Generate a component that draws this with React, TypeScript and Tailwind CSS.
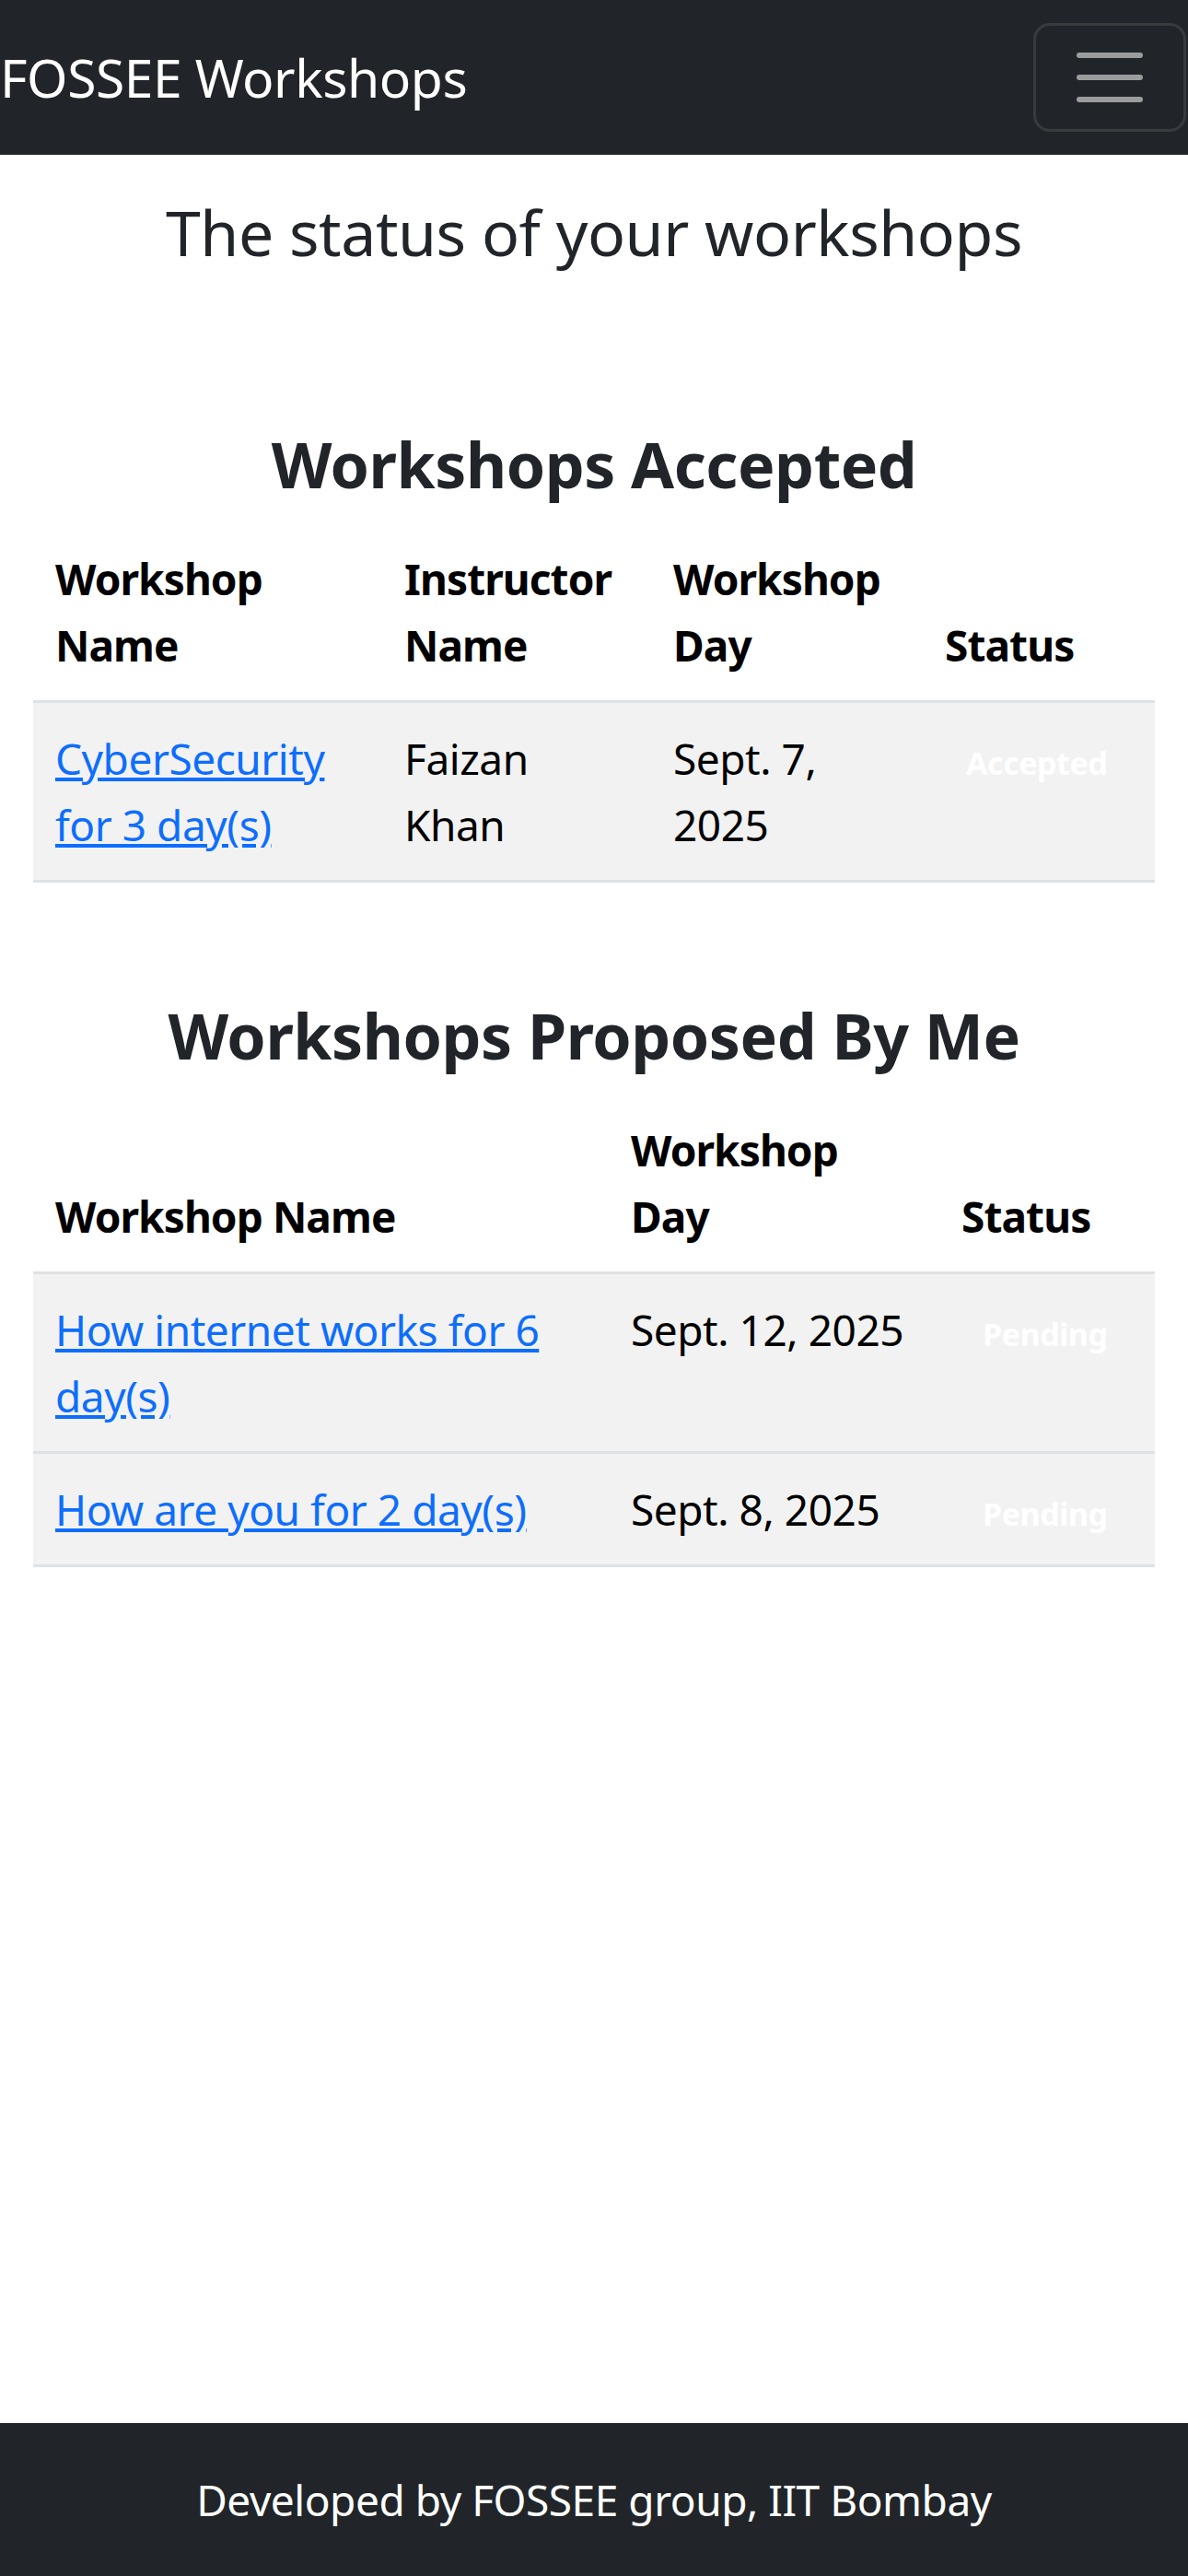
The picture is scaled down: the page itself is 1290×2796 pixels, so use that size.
import React from "react";

const accepted = [
  { name: "CyberSecurity for 3 day(s)", instructor: "Faizan Khan", day: "Sept. 7, 2025", status: "Accepted" },
];

const proposed = [
  { name: "How internet works for 6 day(s)", day: "Sept. 12, 2025", status: "Pending" },
  { name: "How are you for 2 day(s)", day: "Sept. 8, 2025", status: "Pending" },
];

function Badge({ label }: { label: string }) {
  return (
    <span className="inline-block px-[23px] py-[13px] align-baseline text-[34px] font-bold leading-none text-white">
      {label}
    </span>
  );
}

export default function App() {
  return (
    <div
      className="flex min-h-[2796px] flex-col bg-white text-[46px] leading-[72px] tracking-[-0.01em] text-[#212529]"
      style={{ fontFamily: '"Noto Sans", "Open Sans", sans-serif' }}
    >
      {/* Navbar */}
      <nav className="flex h-[168px] items-center justify-between bg-[#212529] pr-[2px]">
        <span className="text-[57px] leading-[90px] text-white">FOSSEE Workshops</span>
        <button className="flex h-[118px] w-[166px] items-center justify-center rounded-[18px] border-[3px] border-white/10">
          <svg width="90" height="90" viewBox="0 0 30 30">
            <path
              d="M4 7h22M4 15h22M4 23h22"
              stroke="rgba(255,255,255,0.55)"
              strokeWidth="2"
              strokeLinecap="round"
              strokeMiterlimit="10"
            />
          </svg>
        </button>
      </nav>

      <main className="flex-1 px-[36px]">
        <h3 className="mt-[42px] text-center text-[68px] font-normal leading-[84px]">
          The status of your workshops
        </h3>

        {/* Accepted */}
        <h3 className="mt-[170px] mb-[24px] text-center text-[68px] font-bold leading-[80px]">
          Workshops Accepted
        </h3>
        <table className="w-full table-fixed border-collapse text-left text-black">
          <colgroup>
            <col className="w-[379px]" />
            <col className="w-[292px]" />
            <col className="w-[295px]" />
            <col />
          </colgroup>
          <thead>
            <tr className="border-b-[3px] border-[#dee2e6] align-bottom">
              <th className="p-[24px] font-bold tracking-[-0.02em]">Workshop Name</th>
              <th className="p-[24px] font-bold tracking-[-0.02em]">Instructor Name</th>
              <th className="p-[24px] font-bold tracking-[-0.02em]">Workshop Day</th>
              <th className="p-[24px] font-bold tracking-[-0.02em]">Status</th>
            </tr>
          </thead>
          <tbody>
            {accepted.map((w) => (
              <tr key={w.name} className="border-b-[3px] border-[#dee2e6] bg-[#f2f2f2] align-top">
                <td className="p-[24px]">
                  <a href="#" className="text-[#0d6efd] underline">{w.name}</a>
                </td>
                <td className="p-[24px]">{w.instructor}</td>
                <td className="p-[24px]">{w.day}</td>
                <td className="p-[24px]">
                  <Badge label={w.status} />
                </td>
              </tr>
            ))}
          </tbody>
        </table>

        {/* Proposed */}
        <h3 className="mt-[126px] mb-[24px] text-center text-[68px] font-bold leading-[80px]">
          Workshops Proposed By Me
        </h3>
        <table className="w-full table-fixed border-collapse text-left text-black">
          <colgroup>
            <col className="w-[625px]" />
            <col className="w-[359px]" />
            <col />
          </colgroup>
          <thead>
            <tr className="border-b-[3px] border-[#dee2e6] align-bottom">
              <th className="p-[24px] font-bold tracking-[-0.02em]">Workshop Name</th>
              <th className="p-[24px] font-bold tracking-[-0.02em]">Workshop Day</th>
              <th className="p-[24px] font-bold tracking-[-0.02em]">Status</th>
            </tr>
          </thead>
          <tbody>
            {proposed.map((w) => (
              <tr key={w.name} className="border-b-[3px] border-[#dee2e6] bg-[#f2f2f2] align-top">
                <td className="p-[24px]">
                  <a href="#" className="text-[#0d6efd] underline">{w.name}</a>
                </td>
                <td className="p-[24px]">{w.day}</td>
                <td className="p-[24px]">
                  <Badge label={w.status} />
                </td>
              </tr>
            ))}
          </tbody>
        </table>
      </main>

      <footer className="flex h-[166px] items-center justify-center bg-[#212529] text-white">
        Developed by FOSSEE group, IIT Bombay
      </footer>
    </div>
  );
}
